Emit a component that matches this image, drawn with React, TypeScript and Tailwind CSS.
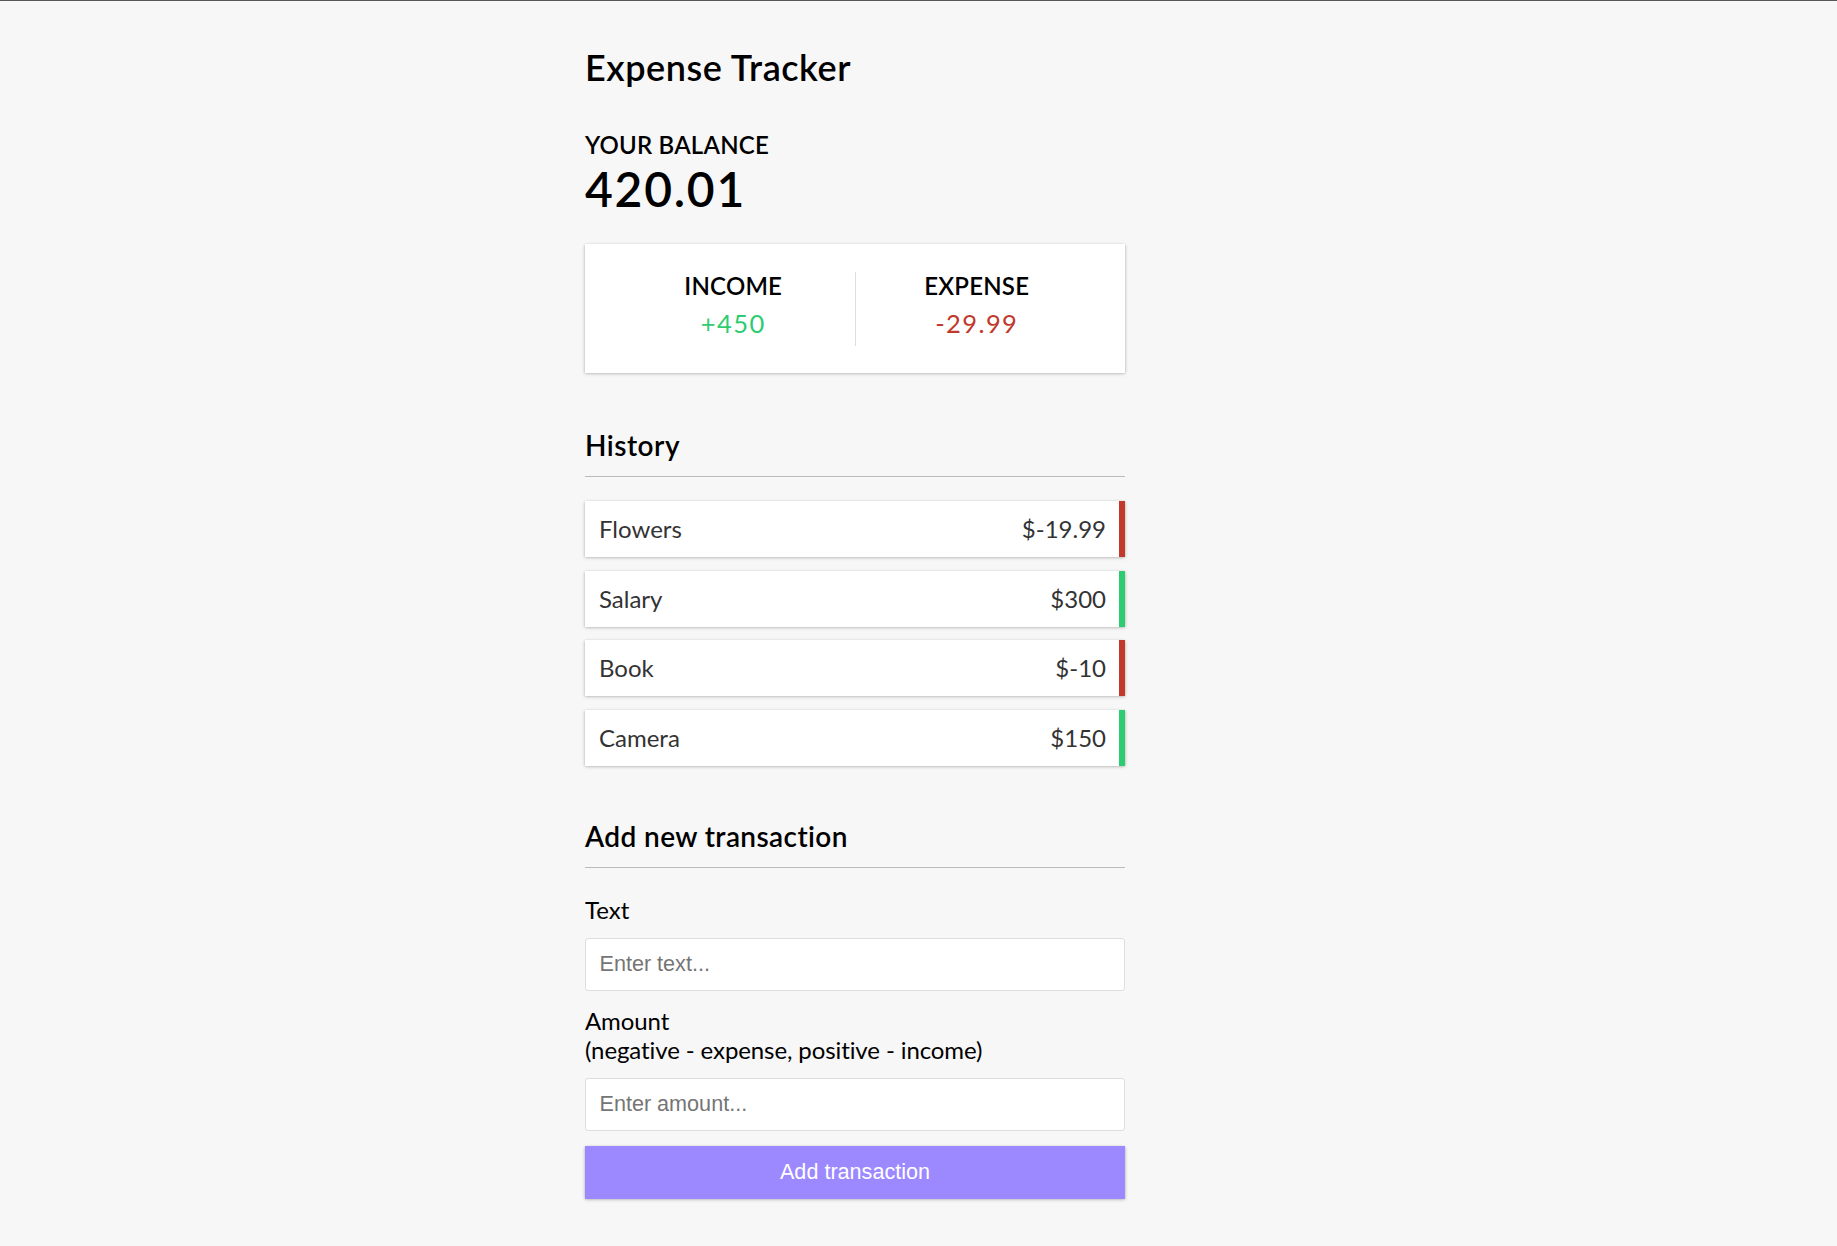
import React from "react";

const items = [
  { text: "Flowers", amount: "$-19.99", plus: false },
  { text: "Salary", amount: "$300", plus: true },
  { text: "Book", amount: "$-10", plus: false },
  { text: "Camera", amount: "$150", plus: true },
];

const shadow = "shadow-[0_1.35px_4px_rgba(0,0,0,0.12),0_1.35px_2.7px_rgba(0,0,0,0.24)]";

export default function App() {
  return (
    <div className="min-h-screen bg-[#f7f7f7] border-t border-[#575757] font-[Lato,sans-serif] text-black">
      <div className="ml-[585px] w-[540px] pt-[45px] pb-[48px]">
        <h2 className="text-[36px] leading-[43.2px] font-semibold tracking-[0.55px]">Expense Tracker</h2>
        <h4 className="mt-[41.5px] text-[24px] leading-[28.8px] uppercase font-semibold tracking-[0.2px]">Your Balance</h4>
        <h1 className="text-[48px] leading-[57.6px] font-semibold tracking-[1.75px]">420.01</h1>

        <div className={"mt-[26.5px] bg-white pt-[28.5px] px-[27px] pb-[27px] flex " + shadow}>
          <div className="flex-1 text-center border-r border-[#dedede]">
            <h4 className="text-[24px] leading-[28.8px] uppercase font-semibold tracking-[0.2px]">Income</h4>
            <p className="my-[7.5px] text-[25.5px] leading-[30.6px] tracking-[1.4px] text-[#2ecc71]">+450</p>
          </div>
          <div className="flex-1 text-center">
            <h4 className="text-[24px] leading-[28.8px] uppercase font-semibold tracking-[0.2px]">Expense</h4>
            <p className="my-[7.5px] text-[25.5px] leading-[30.6px] tracking-[1.4px] text-[#c0392b]">-29.99</p>
          </div>
        </div>

        <h3 className="mt-[56px] text-[28px] leading-[33.6px] font-semibold tracking-[0.5px] pb-[13px] border-b border-[#bbb]">History</h3>
        <ul className="mt-[24px] flex flex-col gap-[13.5px]">
          {items.map((it) => (
            <li
              key={it.text}
              className={
                "h-[56px] bg-white text-[#333] text-[24px] flex items-center justify-between pl-[14px] pr-[13px] border-r-[6px] " +
                shadow +
                " " +
                (it.plus ? "border-[#2ecc71]" : "border-[#c0392b]")
              }
            >
              <span>{it.text}</span>
              <span>{it.amount}</span>
            </li>
          ))}
        </ul>

        <h3 className="mt-[54px] text-[28px] leading-[33.6px] font-semibold tracking-[0.4px] pb-[14px] border-b border-[#bbb]">Add new transaction</h3>
        <form onSubmit={(e) => e.preventDefault()}>
          <label className="block mt-[28px] text-[24px] leading-[28.8px]">Text</label>
          <input
            type="text"
            placeholder="Enter text..."
            className="block mt-[13px] w-full h-[53px] bg-white border border-[#dedede] rounded-[3px] px-[13.5px] text-[21.6px] font-['Liberation_Sans',Arial,sans-serif] placeholder:text-[#757575] outline-none"
          />
          <label className="block mt-[16.5px] text-[24px] leading-[28.8px] tracking-[-0.1px]">
            Amount
            <br />
            (negative - expense, positive - income)
          </label>
          <input
            type="number"
            placeholder="Enter amount..."
            className="block mt-[12.5px] w-full h-[53px] bg-white border border-[#dedede] rounded-[3px] px-[13.5px] text-[21.6px] font-['Liberation_Sans',Arial,sans-serif] placeholder:text-[#757575] outline-none"
          />
          <button
            type="submit"
            className={"block mt-[15px] w-full h-[53px] bg-[#9c88ff] text-white text-[21.6px] font-['Liberation_Sans',Arial,sans-serif] " + shadow}
          >
            Add transaction
          </button>
        </form>
      </div>
    </div>
  );
}
